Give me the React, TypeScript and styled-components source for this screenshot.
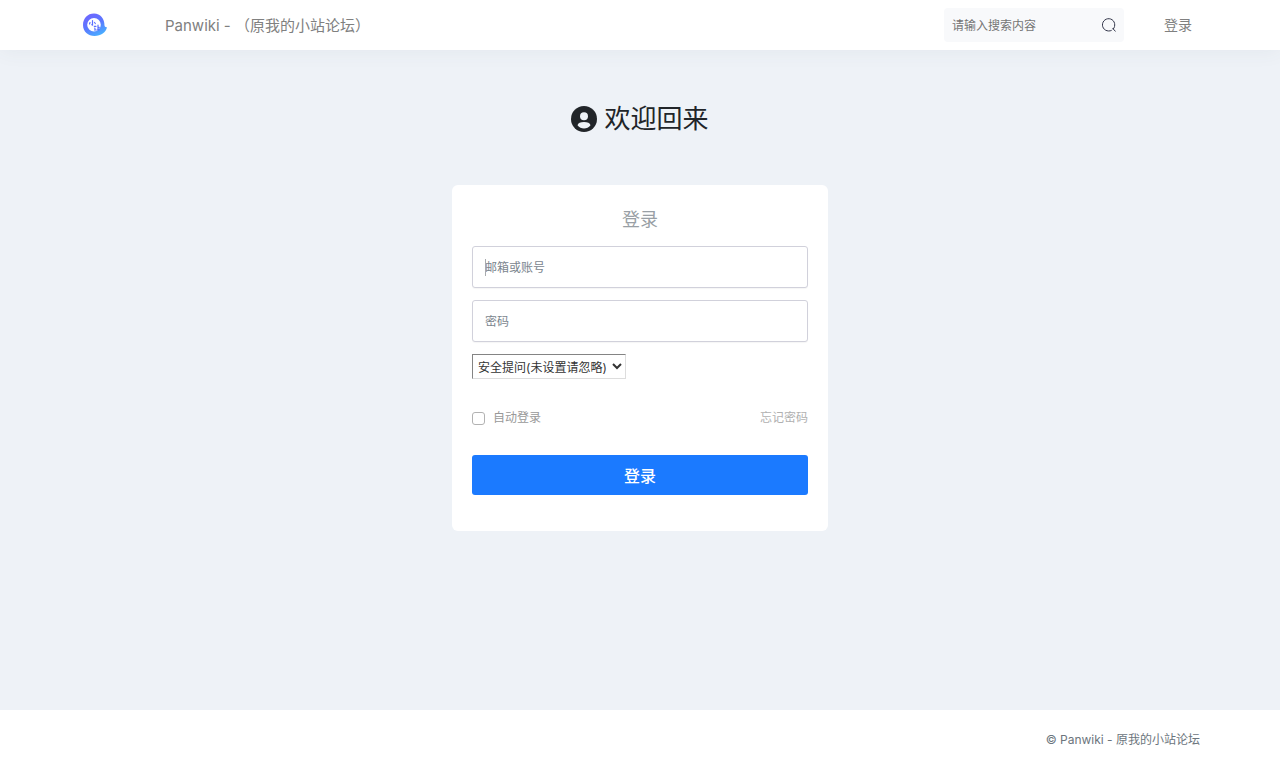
import React from "react";
import styled, { createGlobalStyle } from "styled-components";

const GlobalStyle = createGlobalStyle`
  *, *::before, *::after { box-sizing: border-box; }
  body {
    margin: 0;
    background: #eef2f7;
    color: #212529;
    font-family: Inter, "Noto Sans CJK SC", sans-serif;
    font-size: 12px;
    line-height: 18px;
  }
  input, button, select { font-family: inherit; }
  a { color: inherit; text-decoration: none; }
`;

const Page = styled.div`
  min-height: 100vh;
  display: flex;
  flex-direction: column;
`;

const Header = styled.header`
  height: 50px;
  background: #fff;
  box-shadow: 0 2px 20px rgba(70, 90, 110, 0.06);
`;

const HeaderInner = styled.div`
  max-width: 1120px;
  height: 100%;
  margin: 0 auto;
  display: flex;
  align-items: center;
  color: #808080;
`;

const LogoLink = styled.a`
  display: flex;
  width: 85px;
`;

const SiteName = styled.a`
  font-size: 15px;
  line-height: 24px;
  padding-top: 2px;
  margin-right: auto;
`;

const Search = styled.form`
  display: flex;
  align-items: center;
  width: 180px;
  height: 34px;
  padding: 0 8px;
  border-radius: 4px;
  background: #f8f9fb;
`;

const SearchInput = styled.input`
  flex: 1;
  min-width: 0;
  padding: 0;
  border: 0;
  background: none;
  font-size: 12px;
  outline: none;
  &::placeholder { color: #757575; }
`;

const IconButton = styled.button`
  display: flex;
  padding: 0;
  border: 0;
  background: none;
  cursor: pointer;
`;

const NavLink = styled.a`
  font-size: 14px;
  line-height: 20px;
  margin: 0 8px 0 40px;
`;

const Main = styled.main`
  flex: 1;
  display: flex;
  flex-direction: column;
  align-items: center;
  padding: 50px 16px;
`;

const Welcome = styled.h1`
  display: flex;
  align-items: center;
  gap: 7px;
  margin: 0 0 47px;
  font-size: 26px;
  line-height: 38px;
  font-weight: 400;
`;

const Card = styled.form`
  width: 100%;
  max-width: 376px;
  padding: 21px 20px 36px;
  border-radius: 6px;
  background: #fff;
`;

const CardTitle = styled.h2`
  margin: 0 0 13px;
  font-size: 18px;
  line-height: 27px;
  font-weight: 400;
  text-align: center;
  color: #999fa5;
`;

const Field = styled.div`
  position: relative;
  margin-bottom: 12px;
`;

const TextInput = styled.input`
  display: block;
  width: 100%;
  height: 42px;
  padding: 0 12px;
  border: 1px solid #d1d1db;
  border-radius: 3px;
  background: #fff;
  box-shadow: 0 1px 1px rgba(0, 0, 0, 0.04);
  font-size: 12px;
  outline: none;
  &::placeholder { color: #7b858e; }
`;

const Caret = styled.span`
  position: absolute;
  left: 13px;
  top: 13px;
  width: 1px;
  height: 17px;
  background: #a8abae;
`;

const Question = styled.select`
  display: block;
  width: 154px;
  height: 25px;
  padding: 1px 1px 0;
  border-width: 1px;
  border-style: solid;
  border-color: #848484 #ddd #ddd #848484;
  border-radius: 0;
  background: #fff;
  color: #333;
  font-size: 12px;
`;

const Options = styled.div`
  display: flex;
  align-items: center;
  justify-content: space-between;
  margin: 30px 0 28px;
  color: #999;
`;

const Remember = styled.label`
  display: flex;
  align-items: center;
  gap: 8px;
`;

const Tick = styled.input`
  width: 13px;
  height: 13px;
  margin: 0;
  appearance: none;
  border: 1px solid #b2b2b2;
  border-radius: 3px;
  background: #fff;
  &:checked { background: #1b7aff; }
`;

const Forgot = styled.a`
  color: #b0b0b0;
`;

const Submit = styled.button`
  display: block;
  width: 100%;
  height: 40px;
  border: 0;
  border-radius: 3px;
  background: #1b7aff;
  color: #fff;
  font-size: 16px;
  font-weight: 500;
  cursor: pointer;
`;

const Footer = styled.footer`
  background: #fff;
  padding: 21px 80px 19px;
  text-align: right;
  color: #6c757d;
`;

function Logo() {
  return (
    <svg width="28" height="28" viewBox="0 0 28 28" role="img" aria-label="Panwiki">
      <defs>
        <linearGradient id="ring" x1="0.2" y1="0" x2="0.75" y2="1">
          <stop offset="0" stopColor="#7066ff" />
          <stop offset="0.5" stopColor="#5b78ff" />
          <stop offset="1" stopColor="#46b4ff" />
        </linearGradient>
      </defs>
      <path
        fill="url(#ring)"
        fillRule="evenodd"
        d="M14 2.500C7.500 2.500 3 7.400 3 14C3 20.700 8.200 25 14.500 25C21 25 26 21.500 27 16C26 16.500 24.800 16 24.500 14.500C24.500 7.500 20.500 2.500 14 2.500ZM14 7A6.800 6.800 0 1 1 14 20.600A6.800 6.800 0 1 1 14 7Z"
      />
      <g stroke="#5b70ff" strokeWidth="1.200" fill="none" strokeLinecap="round">
        <path d="M12.500 9.500V14L11.800 13.700M10 11.500L9.500 13M14.500 11.500L15.300 12.500" />
        <path d="M14.300 15.300H16M14.800 17L15 18.200M14.500 19H16.300M18 14V16.300H19.300M17.800 17.800H18.800V18.800H17.800Z" />
      </g>
    </svg>
  );
}

function SearchIcon() {
  return (
    <svg width="14" height="16" viewBox="0 0 14 16" fill="none" stroke="#33364a" strokeLinecap="round" aria-hidden="true">
      <path d="M9.300 13.500A6.200 6.200 0 1 1 11.300 12M10.800 11.500L13.300 14.200" />
    </svg>
  );
}

function UserIcon() {
  return (
    <svg width="26" height="26" viewBox="0 0 26 26" aria-hidden="true">
      <circle cx="13" cy="13" r="13" fill="#212529" />
      <circle cx="13" cy="10.300" r="4" fill="#eef2f7" />
      <path d="M6.500 19.300C7 16.900 9.500 16 13 16S19 16.900 19.500 19.300C17.700 21.600 15.600 22.600 13 22.600S8.300 21.600 6.500 19.300Z" fill="#eef2f7" />
    </svg>
  );
}

export default function App() {
  return (
    <Page>
      <GlobalStyle />
      <Header>
        <HeaderInner>
          <LogoLink href="#"><Logo /></LogoLink>
          <SiteName href="#">Panwiki - （原我的小站论坛）</SiteName>
          <Search role="search">
            <SearchInput type="text" aria-label="搜索" placeholder="请输入搜索内容" />
            <IconButton type="submit" aria-label="搜索"><SearchIcon /></IconButton>
          </Search>
          <NavLink href="#">登录</NavLink>
        </HeaderInner>
      </Header>
      <Main>
        <Welcome><UserIcon />欢迎回来</Welcome>
        <Card>
          <CardTitle>登录</CardTitle>
          <Field>
            <TextInput type="text" aria-label="邮箱或账号" placeholder="邮箱或账号" />
            <Caret />
          </Field>
          <Field>
            <TextInput type="password" aria-label="密码" placeholder="密码" />
          </Field>
          <Question aria-label="安全提问">
            <option>安全提问(未设置请忽略)</option>
          </Question>
          <Options>
            <Remember><Tick type="checkbox" />自动登录</Remember>
            <Forgot href="#">忘记密码</Forgot>
          </Options>
          <Submit type="submit">登录</Submit>
        </Card>
      </Main>
      <Footer>© Panwiki - 原我的小站论坛</Footer>
    </Page>
  );
}
